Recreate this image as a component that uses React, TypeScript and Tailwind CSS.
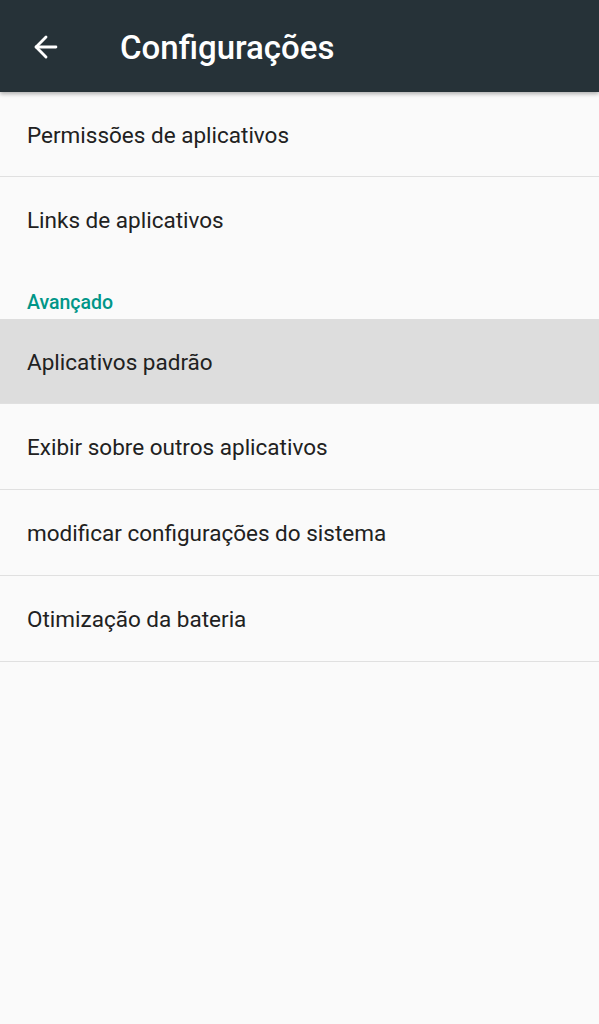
import { ArrowLeft } from "lucide-react";

const topItems = ["Permissões de aplicativos", "Links de aplicativos"];
const advancedItems = [
  "Aplicativos padrão",
  "Exibir sobre outros aplicativos",
  "modificar configurações do sistema",
  "Otimização da bateria",
];

export default function App() {
  return (
    <div className="min-h-[1024px] bg-[#fafafa] font-['Roboto',sans-serif]">
      <header className="h-[92px] bg-[#263238] flex items-center shadow-[0_2px_4px_rgba(0,0,0,0.3)] relative">
        <div className="w-[120px] pl-[29px] pt-[1px]">
          <ArrowLeft className="w-[34px] h-[34px] text-white" strokeWidth={2} />
        </div>
        <h1 className="text-white text-[33px] font-medium pt-[3px]">Configurações</h1>
      </header>

      <ul>
        <li className="h-[85px] flex items-center pt-[3px] px-[27px] border-b border-[#e0e0e0] text-[22.5px] text-[#212121]">
          {topItems[0]}
        </li>
        <li className="h-[85px] flex items-center pt-[3px] px-[27px] text-[22.5px] text-[#212121]">
          {topItems[1]}
        </li>
      </ul>

      <div className="h-[57px] flex items-end pb-[2px] px-[27px] text-[19.5px] font-medium text-[#009688]">
        Avançado
      </div>

      <ul>
        {advancedItems.map((item, index) => (
          <li
            key={index}
            className={
              index === 0
                ? "h-[85px] flex items-center pt-[3px] px-[27px] bg-[#dddddd] border-b border-[#e0e0e0] text-[22.5px] text-[#212121]"
                : "h-[86px] flex items-center pt-[3px] px-[27px] border-b border-[#e0e0e0] text-[22.5px] text-[#212121]"
            }
          >
            {item}
          </li>
        ))}
      </ul>
    </div>
  );
}
